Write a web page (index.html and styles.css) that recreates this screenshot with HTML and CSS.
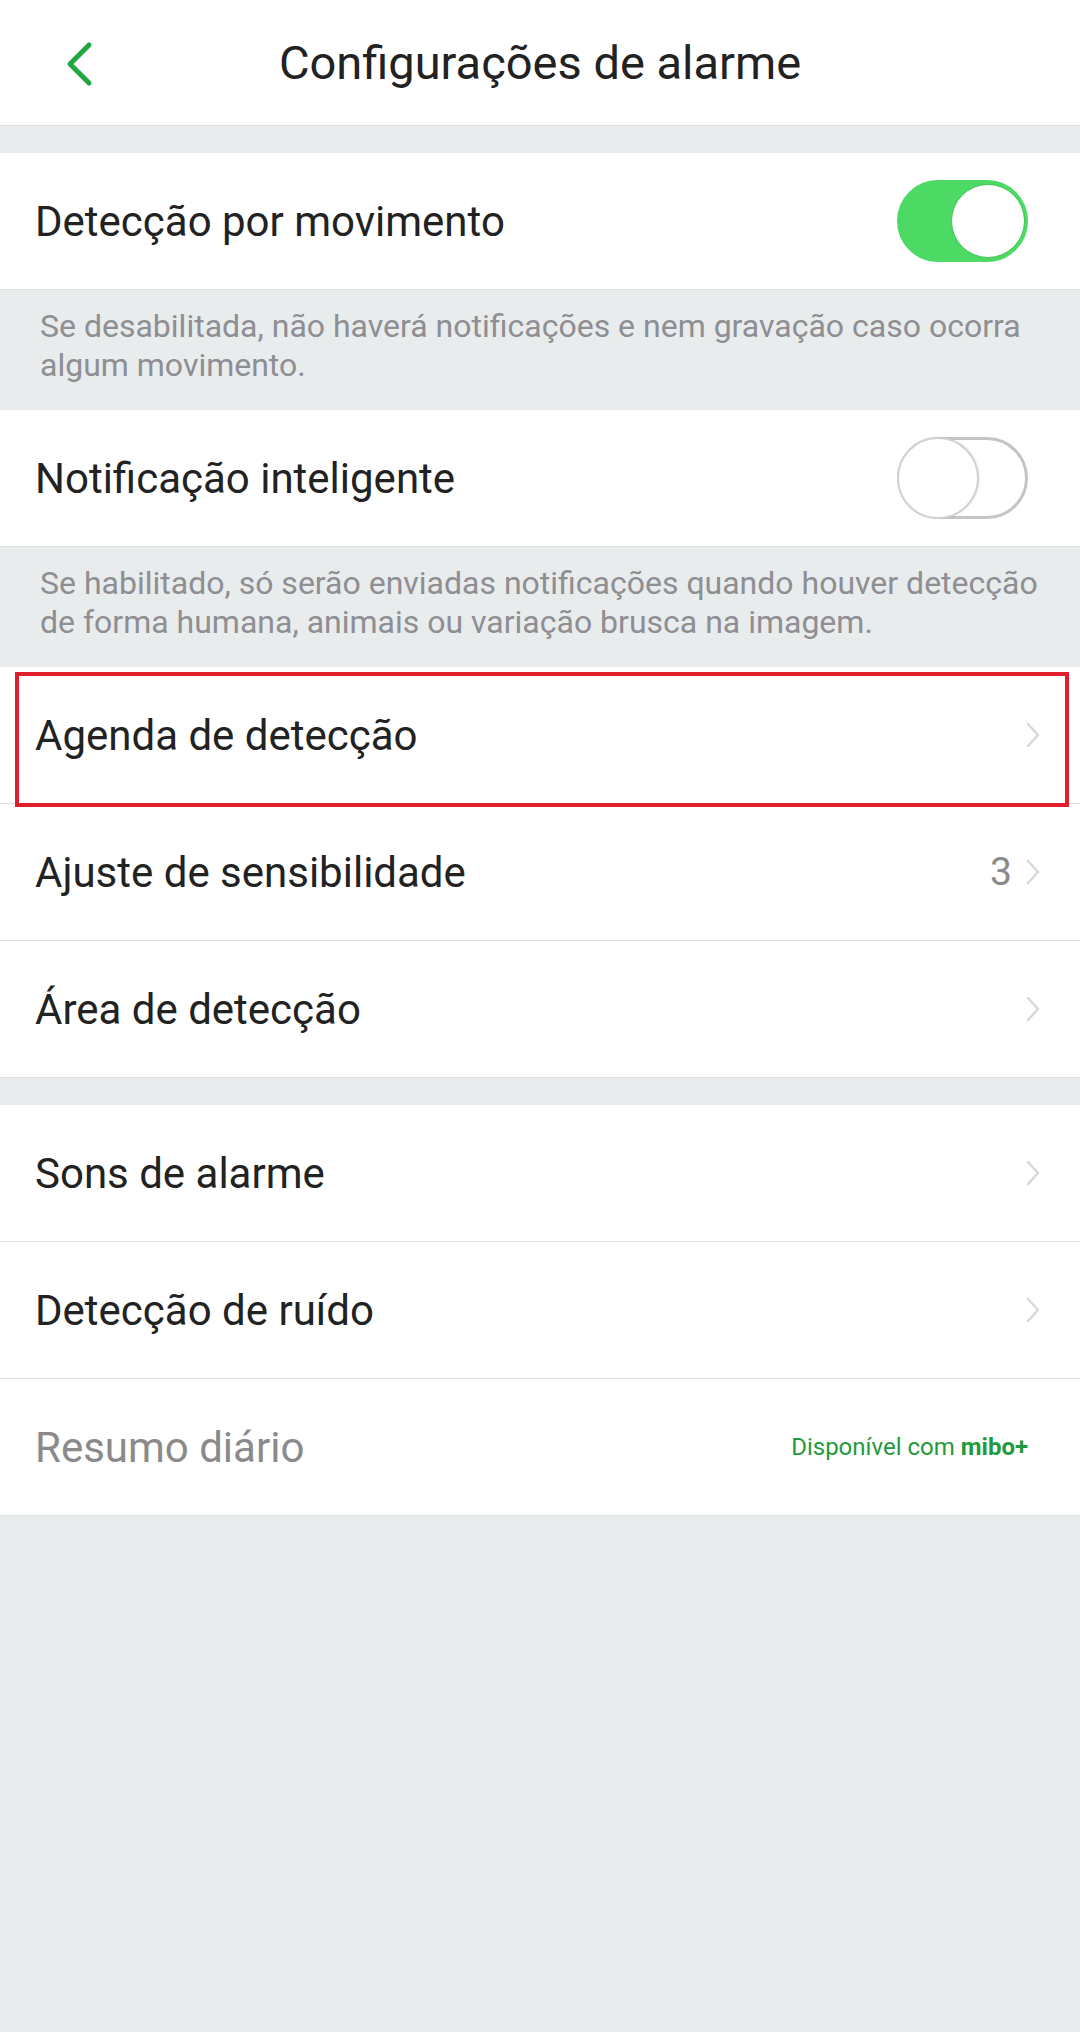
FILE: index.html
```html
<!DOCTYPE html>
<html lang="pt">
<head>
    <meta charset="UTF-8">
    <meta name="viewport" content="width=device-width, initial-scale=1.0">
    <title>Configurações de alarme</title>
    <link rel="stylesheet" href="styles.css">
</head>
<body>
    <div class="header">
        <a class="back" href="#">
            <svg width="30" height="46" viewBox="0 0 30 46">
                <path d="M25 4 L6 23 L25 42" fill="none" stroke="#22a843" stroke-width="5" stroke-linecap="round" stroke-linejoin="round"/>
            </svg>
        </a>
        <h1>Configurações de alarme</h1>
    </div>

    <div class="group">
        <div class="row">
            <span class="label">Detecção por movimento</span>
            <span class="switch on"><span class="knob"></span></span>
        </div>
    </div>
    <div class="note">Se desabilitada, não haverá notificações e nem gravação caso ocorra algum movimento.</div>

    <div class="group">
        <div class="row">
            <span class="label">Notificação inteligente</span>
            <span class="switch"><span class="knob"></span></span>
        </div>
    </div>
    <div class="note">Se habilitado, só serão enviadas notificações quando houver detecção de forma humana, animais ou variação brusca na imagem.</div>

    <div class="group">
        <div class="row highlighted">
            <span class="label">Agenda de detecção</span>
            <span class="chevron"></span>
        </div>
        <div class="row">
            <span class="label">Ajuste de sensibilidade</span>
            <span class="value">3</span>
            <span class="chevron"></span>
        </div>
        <div class="row">
            <span class="label">Área de detecção</span>
            <span class="chevron"></span>
        </div>
    </div>

    <div class="group spaced">
        <div class="row">
            <span class="label">Sons de alarme</span>
            <span class="chevron"></span>
        </div>
        <div class="row">
            <span class="label">Detecção de ruído</span>
            <span class="chevron"></span>
        </div>
        <div class="row">
            <span class="label muted">Resumo diário</span>
            <span class="promo">Disponível com <b>mibo+</b></span>
        </div>
    </div>
</body>
</html>
```

FILE: styles.css
```css
body {
    font-family: Roboto, "Noto Sans", Arial, sans-serif;
    background-color: #e8eced;
    color: #222;
    margin: 0;
    padding: 0;
    min-height: 2032px;
}
.header {
    position: relative;
    height: 125px;
    background-color: white;
    border-bottom: 1px solid #dcdcdc;
    display: flex;
    align-items: center;
    justify-content: center;
}
.header h1 {
    margin: 0;
    font-size: 47px;
    font-weight: 400;
    color: #222;
}
.back {
    position: absolute;
    left: 64px;
    top: 41px;
    display: block;
    line-height: 0;
}
.group {
    margin-top: 27px;
    background-color: white;
}
.note + .group {
    margin-top: 0;
}
.row {
    position: relative;
    box-sizing: border-box;
    height: 137px;
    display: flex;
    align-items: center;
    padding: 0 39px 0 35px;
    border-bottom: 1px solid #e0e0e0;
}
.label {
    flex: 1;
    font-size: 42px;
}
.label.muted {
    color: #8a8a8a;
}
.value {
    font-size: 39px;
    color: #8a8a8a;
    margin-right: 13px;
}
.chevron {
    width: 16px;
    height: 26px;
    background: no-repeat center;
    background-image: url("data:image/svg+xml,%3Csvg xmlns='http://www.w3.org/2000/svg' width='16' height='26' viewBox='0 0 16 26'%3E%3Cpath d='M3 2 L13 13 L3 24' fill='none' stroke='%23d8d8dc' stroke-width='2.5' stroke-linecap='round' stroke-linejoin='round'/%3E%3C/svg%3E");
}
.promo {
    font-size: 24px;
    color: #1f9a3c;
    margin-right: 13px;
}
.promo b {
    font-weight: 700;
}
.highlighted::after {
    content: "";
    position: absolute;
    left: 15px;
    right: 11px;
    top: 5px;
    bottom: -4px;
    border: 4px solid #e01e2c;
    pointer-events: none;
}
.note {
    padding: 17px 40px 25px 40px;
    font-size: 32px;
    line-height: 39px;
    color: #8e8e93;
}
.switch {
    position: relative;
    box-sizing: border-box;
    width: 131px;
    height: 82px;
    border-radius: 41px;
    margin-right: 13px;
    background-color: white;
    border: 3px solid #c4c4c8;
}
.switch .knob {
    position: absolute;
    top: -3px;
    left: -3px;
    box-sizing: border-box;
    width: 82px;
    height: 82px;
    border-radius: 50%;
    background-color: white;
    border: 2px solid #d2d2d6;
    box-shadow: 1px 0 2px rgba(0, 0, 0, 0.08);
}
.switch.on {
    background-color: #4cd964;
    border-color: #4cd964;
}
.switch.on .knob {
    top: 1px;
    left: auto;
    right: 0;
    width: 74px;
    height: 74px;
    border: 1.5px solid #46c45c;
    box-shadow: none;
}
```
